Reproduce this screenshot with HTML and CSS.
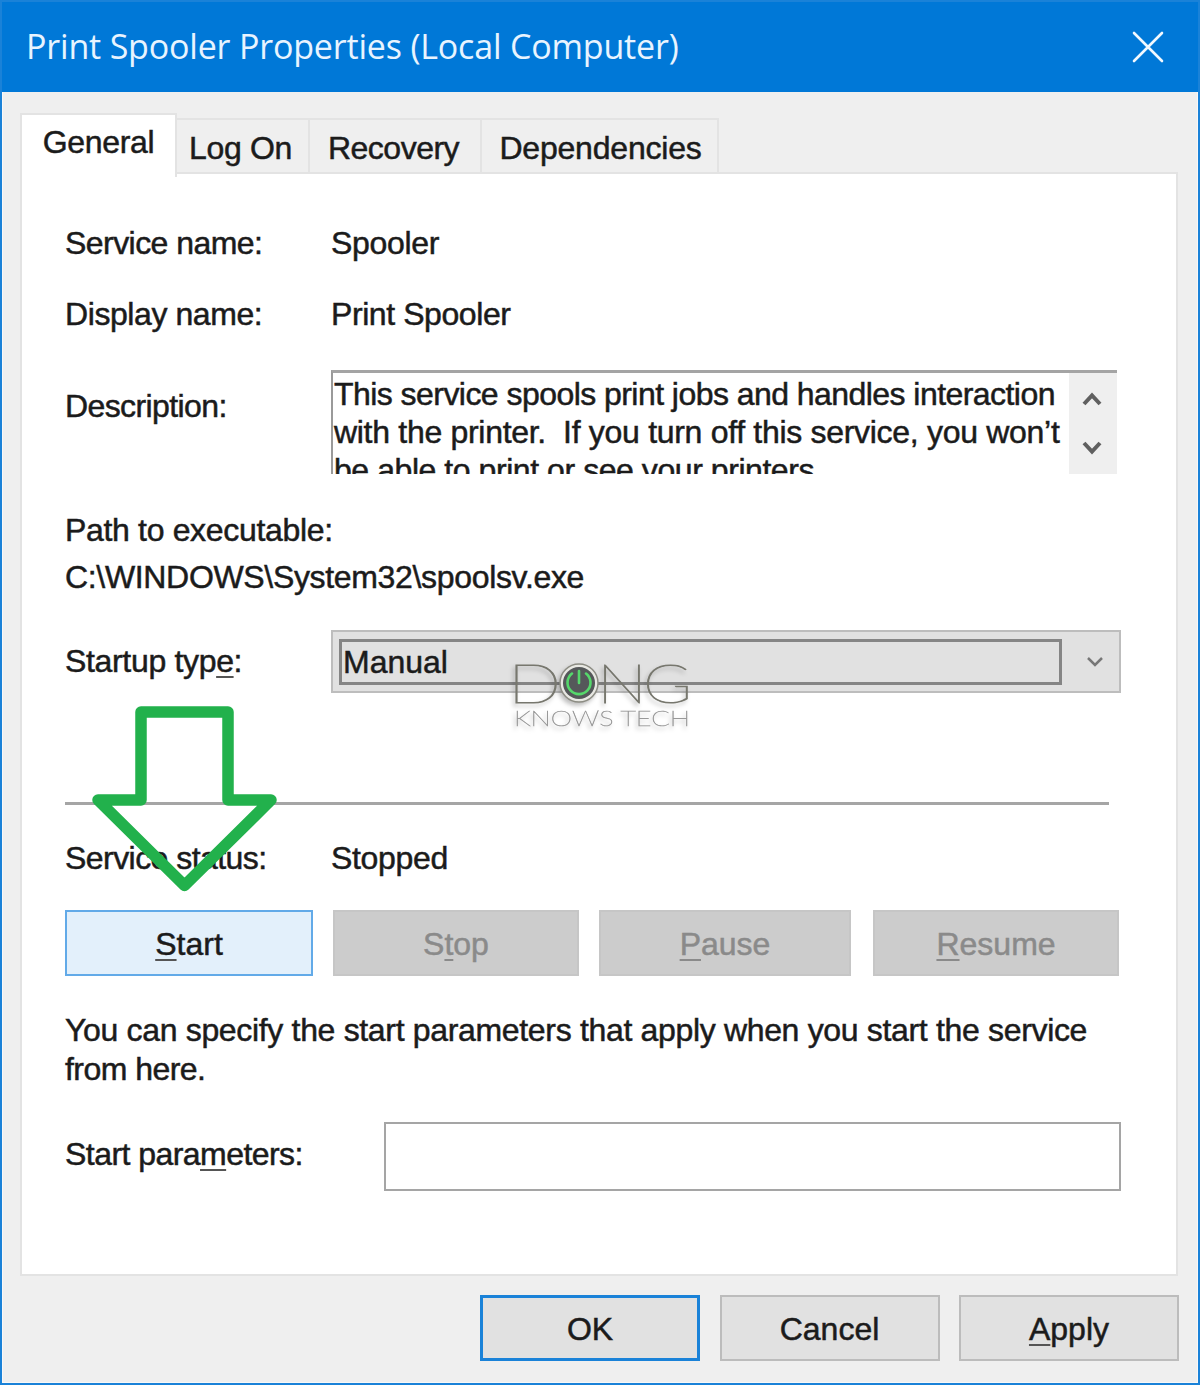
FILE: index.html
```html
<!DOCTYPE html>
<html lang="en">
<head>
<meta charset="utf-8">
<title>Print Spooler Properties (Local Computer)</title>
<link rel="stylesheet" href="styles.css">
</head>
<body>
<main class="window">
  <header class="titlebar">
    <h1 class="title">Print Spooler Properties (Local Computer)</h1>
    <svg class="close" width="32" height="32" viewBox="0 0 32 32"><path d="M2 2L30 30M30 2L2 30"/></svg>
  </header>
  <nav class="tabs">
    <div class="tab active">General</div>
    <div class="tab logon">Log On</div>
    <div class="tab recovery">Recovery</div>
    <div class="tab dependencies">Dependencies</div>
  </nav>
  <section class="panel">
    <div class="row service"><span class="tight">Service name:</span><span>Spooler</span></div>
    <div class="row display"><span>Display name:</span><span>Print Spooler</span></div>
    <div class="row description">
      <span>Description:</span>
      <div class="memo">
        <div class="memo-text"><span class="tight">This service spools print jobs and handles interaction</span><br><span class="loose">with the printer.&nbsp; If you turn off this service, you won’t</span><br>be able to print or see your printers</div>
        <div class="scroll">
          <svg width="20" height="16" viewBox="0 0 20 16"><path d="M2 13L10 4.500L18 13"/></svg>
          <svg width="20" height="16" viewBox="0 0 20 16"><path d="M2 3L10 11.500L18 3"/></svg>
        </div>
      </div>
    </div>
    <div class="line path-label">Path to executable:</div>
    <div class="line path">C:\WINDOWS\System32\spoolsv.exe</div>
    <div class="row startup">
      <span>Startup typ<u>e</u>:</span>
      <div class="select">
        <div class="select-value">Manual</div>
        <svg width="18" height="12" viewBox="0 0 18 12"><path d="M2 2L9 9L16 2"/></svg>
      </div>
    </div>
    <div class="rule"></div>
    <div class="row status"><span class="tight">Service status:</span><span>Stopped</span></div>
    <div class="controls">
      <div class="btn start"><span><u>S</u>tart</span></div>
      <div class="btn disabled"><span>S<u>t</u>op</span></div>
      <div class="btn disabled"><span><u>P</u>ause</span></div>
      <div class="btn disabled"><span><u>R</u>esume</span></div>
    </div>
    <p class="note">You can specify the start parameters that apply when you start the service<br><span class="tight">from here.</span></p>
    <div class="params">
      <span class="tight">Start para<u>m</u>eters:</span>
      <div class="input"></div>
    </div>
  </section>
  <footer class="footer">
    <div class="btn ok">OK</div>
    <div class="btn">Cancel</div>
    <div class="btn"><span><u>A</u>pply</span></div>
  </footer>

  <svg class="arrow" width="190" height="205" viewBox="0 0 190 205"><path d="M51 17H138V105H181L94.500 190.500L8 105H51Z"/></svg>

  <svg class="watermark" width="200" height="90" viewBox="0 0 200 90">
    <g class="wm-big">
      <text x="8" y="53" textLength="53" lengthAdjust="spacingAndGlyphs">D</text>
      <text x="97" y="53" textLength="50" lengthAdjust="spacingAndGlyphs">N</text>
      <text x="143" y="53" textLength="49" lengthAdjust="spacingAndGlyphs">G</text>
    </g>
    <circle class="wm-ring" cx="79" cy="33" r="19"/>
    <circle class="wm-disc" cx="79" cy="33" r="16"/>
    <path class="wm-power" d="M79 21V33M72 23.500A11.500 11.500 0 1 0 86 23.500"/>
    <text class="wm-small" x="14" y="76" textLength="176" lengthAdjust="spacingAndGlyphs">KNOWS TECH</text>
  </svg>
</main>
</body>
</html>
```
FILE: styles.css
```css
* { box-sizing: border-box; }
body {
  margin: 0;
  font-family: "Liberation Sans", Arial, sans-serif;
  font-size: 32px;
  line-height: 38px;
  letter-spacing: -0.33px;
  color: #1b1b1b;
  -webkit-text-stroke: 0.5px currentColor;
}
.window {
  position: relative;
  width: 1200px;
  height: 1385px;
  display: flex;
  flex-direction: column;
  border: 2px solid #1a82d8;
  background: #efefef;
  box-shadow: inset 0 0 0 1px #f8f8f8;
  white-space: nowrap;
}
.titlebar {
  height: 90px;
  flex: none;
  display: flex;
  align-items: center;
  justify-content: space-between;
  padding: 0 34px 0 24px;
  background: #0078d7;
  color: #e8f4ff;
}
.title {
  margin: 0 0 2px;
  font: 400 34px/46px "Open Sans", "Noto Sans", sans-serif;
  letter-spacing: -0.18px;
  -webkit-text-stroke: 0;
}
svg { fill: none; }
.close { stroke: #f2f9ff; stroke-width: 2.6; stroke-linecap: round; }
.tabs {
  height: 60px;
  flex: none;
  margin: 21px 0 0 18px;
  display: flex;
  align-items: flex-end;
  position: relative;
  z-index: 1;
}
.tab {
  height: 54px;
  padding-top: 9px;
  margin-bottom: 1px;
  text-align: center;
  border: 2px solid #e3e3e3;
  border-left: 0;
  border-bottom: 0;
}
.tab.active {
  width: 157px;
  height: 64px;
  padding-top: 8px;
  margin-bottom: -4px;
  border-left: 2px solid #e3e3e3;
  background: #fff;
}
.logon { width: 133px; padding-right: 4px; }
.recovery { width: 172px; padding-right: 3px; letter-spacing: -0.5px; }
.dependencies { width: 237px; padding-left: 2px; letter-spacing: -0.2px; }
.panel {
  flex: none;
  width: 1158px;
  height: 1104px;
  margin: -1px 0 0 18px;
  padding: 50px 0 0 43px;
  border: 2px solid #e3e3e3;
  background: #fff;
}
.row { display: grid; grid-template-columns: 266px 1fr; height: 38px; }
.tight { letter-spacing: -0.55px; }
.loose { letter-spacing: -0.3px; }
.display { margin-top: 33px; letter-spacing: -0.42px; }
.description { margin-top: 37px; height: 104px; letter-spacing: -0.44px; }
.description > span { margin-top: 17px; letter-spacing: -0.6px; }
.memo {
  width: 786px;
  height: 104px;
  display: flex;
  border-top: 3px solid #a4a4a4;
  border-left: 2px solid #9a9a9a;
  overflow: hidden;
}
.memo-text { width: 736px; padding: 2px 0 0 1px; }
.scroll {
  width: 48px;
  height: 101px;
  display: flex;
  flex-direction: column;
  align-items: center;
  justify-content: space-between;
  padding: 18px 2px 18px 0;
  background: #efefef;
}
.scroll svg { stroke: #606060; stroke-width: 4; }
.path-label { margin-top: 37px; }
.path { margin-top: 9px; }
.startup { margin-top: 34px; height: 63px; }
.startup > span { margin-top: 12px; }
.select {
  width: 790px;
  height: 63px;
  display: flex;
  align-items: center;
  justify-content: space-between;
  padding: 0 15px 0 6px;
  border: 2px solid #bdbdbd;
  background: #e1e1e1;
}
.select-value {
  width: 723px;
  height: 46px;
  padding: 1px 0 0 1px;
  border: 3px solid #858585;
  letter-spacing: 0;
}
.select svg { stroke: #777; stroke-width: 2.5; }
.rule { width: 1044px; height: 3px; margin-top: 109px; background: #a5a5a5; }
.status { margin-top: 34px; }
.controls {
  width: 1055px;
  height: 66px;
  margin-top: 33px;
  display: grid;
  grid-template-columns: 248px 246px 252px 246px;
  column-gap: 20px;
  letter-spacing: 0;
}
.controls .btn:last-child { margin-left: 2px; margin-right: -2px; }
.btn {
  display: flex;
  align-items: center;
  justify-content: center;
  padding-top: 1px;
  border: 2px solid #bcbcbc;
  background: #e1e1e1;
}
.start { border-color: #62aae8; background: #e3f0fb; }
.disabled { border-color: #c6c6c6; background: #ccc; color: #8a8a8a; }
.note { margin: 35px 0 0; line-height: 38.5px; }
.params { display: flex; margin-top: 34px; }
.params > span { width: 319px; padding-top: 13px; }
.input { width: 737px; height: 69px; border: 2px solid #a5a5a5; }
.footer {
  display: grid;
  grid-template-columns: repeat(3, 220px);
  gap: 19.5px;
  height: 66px;
  margin: 19px 0 0 478px;
  letter-spacing: 0;
}
.ok { border: 3px solid #1a82d8; }
u { text-decoration-color: #555; text-decoration-thickness: 2px; text-underline-offset: 4px; text-decoration-skip-ink: none; }
.disabled u { text-decoration-color: #8a8a8a; }
.arrow { position: absolute; left: 88px; top: 693px; stroke: #22b14c; stroke-width: 11.500; stroke-linejoin: round; }
.watermark {
  position: absolute;
  left: 498px;
  top: 648px;
  letter-spacing: 0;
  -webkit-text-stroke: 0;
  filter: drop-shadow(-2px 3px 2px rgba(0,0,0,.25));
}
.wm-big { font: 100 54px Lato, sans-serif; fill: #77776e; stroke: #77776e; stroke-width: 1; }
.wm-small { font: 100 22px Lato, sans-serif; fill: #999; stroke: #999; stroke-width: 0.600; }
.wm-ring { fill: #e8e8e3; stroke: #8c8c83; stroke-width: 1.500; }
.wm-disc { fill: #55585a; }
.wm-power { stroke: #55d86b; stroke-width: 2.600; stroke-linecap: round; }
```
